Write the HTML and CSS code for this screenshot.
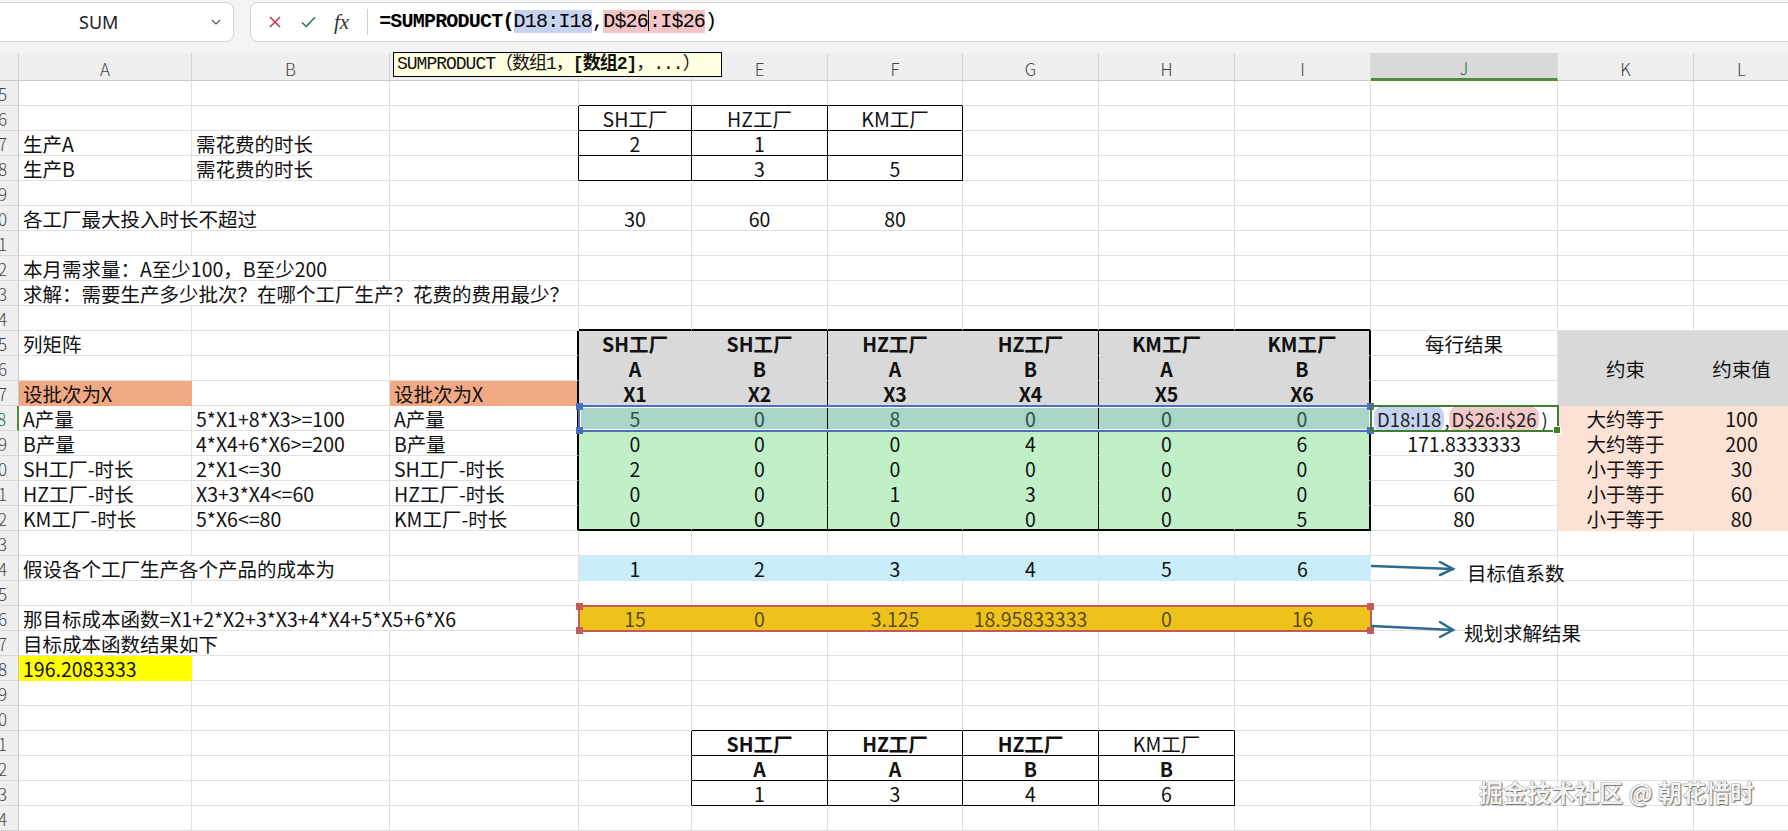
FILE: index.html
```html
<!DOCTYPE html>
<html lang="zh-CN">
<head>
  <meta charset="UTF-8">
  <title>规划求解 - SUMPRODUCT</title>
  <link rel="stylesheet" href="styles.css">
</head>
<body>

  <div class="topbar">
    <div class="namebox">
      <span class="name">SUM</span>
      <svg class="chev" width="10" height="6" viewBox="0 0 10 6"><path d="M1 1 L5 5 L9 1" fill="none" stroke="#555" stroke-width="1.2"/></svg>
    </div>
    <div class="fbox">
      <svg class="ic-x" width="12" height="12" viewBox="0 0 12 12"><path d="M1 1 L11 11 M11 1 L1 11" stroke="#c4314b" stroke-width="1.5" fill="none"/></svg>
      <svg class="ic-ok" width="15" height="12" viewBox="0 0 15 12"><path d="M1 6.5 L5.2 10.5 L14 1.2" stroke="#217346" stroke-width="1.5" fill="none"/></svg>
      <span class="ic-fx">fx</span>
      <span class="fsep"></span>
      <span class="formula"><b>=SUMPRODUCT(</b><span class="fb-blue">D18:I18</span>,<span class="fb-red">D$26<i class="caret"></i>:I$26</span>)</span>
    </div>
  </div>

  <div class="sheet" id="sheet">
    <div class="ref ref-blue"><i class="tl"></i><i class="tr"></i><i class="bl"></i><i class="br-h"></i></div>
    <div class="ref ref-red"><i class="tl"></i><i class="tr"></i><i class="bl"></i><i class="br-h"></i></div>
  </div>

  <div class="tip">SUMPRODUCT（数组1，<b>[数组2]</b>，...）</div>

  <svg class="notes" width="260" height="100" viewBox="0 0 260 100">
    <g stroke="#2d6b8c" stroke-width="2.5" fill="none" stroke-linecap="round">
      <path d="M12 16 L93 19"/>
      <path d="M80 12 L93 19 L80 25"/>
      <path d="M12 76 L93 80"/>
      <path d="M80 72 L93 80 L80 87"/>
    </g>
    <text x="107" y="31">目标值系数</text>
    <text x="104" y="91">规划求解结果</text>
  </svg>

  <div class="watermark">掘金技术社区 @ 朝花惜时</div>

  <script>
    const COLS = "ABCDEFGHIJKL";
    const TOP = 5, BOTTOM = 34;
    const cells = {};
    const extra = {};

    function put(ref, text, cls = "", span = 1) {
      cells[ref] = { text: String(text), cls, span };
    }

    function addCls(ref, ...c) {
      (extra[ref] = extra[ref] || []).push(...c);
    }

    function parse(ref) {
      return { c: COLS.indexOf(ref[0]), r: +ref.slice(1) };
    }

    function each(from, to, fn) {
      const a = parse(from), b = parse(to);
      for (let r = a.r; r <= b.r; r++) {
        for (let c = a.c; c <= b.c; c++) fn(COLS[c] + r);
      }
    }

    function fill(from, to, cls) {
      each(from, to, ref => addCls(ref, cls));
    }

    // thin black lines round and inside a block
    function thinBox(from, to) {
      const a = parse(from), b = parse(to);
      each(from, to, ref => addCls(ref, "br", "bb"));
      for (let r = a.r; r <= b.r; r++) addCls(COLS[a.c - 1] + r, "br");
      for (let c = a.c; c <= b.c; c++) addCls(COLS[c] + (a.r - 1), "bb");
    }

    // texts
    put("D6", "SH工厂", "c"); put("E6", "HZ工厂", "c"); put("F6", "KM工厂", "c");
    put("A7", "生产A"); put("B7", "需花费的时长"); put("D7", 2, "c"); put("E7", 1, "c");
    put("A8", "生产B"); put("B8", "需花费的时长"); put("E8", 3, "c"); put("F8", 5, "c");
    put("A10", "各工厂最大投入时长不超过", "", 2);
    put("D10", 30, "c"); put("E10", 60, "c"); put("F10", 80, "c");
    put("A12", "本月需求量：A至少100，B至少200", "", 2);
    put("A13", "求解：需要生产多少批次？在哪个工厂生产？花费的费用最少？", "", 3);
    put("A15", "列矩阵");
    put("J15", "每行结果", "c");
    put("K16", "约束", "c"); put("L16", "约束值", "c");
    put("A17", "设批次为X"); put("C17", "设批次为X");

    const head = [["SH工厂", "A", "X1"], ["SH工厂", "B", "X2"], ["HZ工厂", "A", "X3"],
                  ["HZ工厂", "B", "X4"], ["KM工厂", "A", "X5"], ["KM工厂", "B", "X6"]];
    head.forEach((h, i) => h.forEach((t, k) => put(COLS[3 + i] + (15 + k), t, "c b")));

    const rows = [
      ["A产量", "5*X1+8*X3>=100", [5, 0, 8, 0, 0, 0], "", "大约等于", 100],
      ["B产量", "4*X4+6*X6>=200", [0, 0, 0, 4, 0, 6], "171.8333333", "大约等于", 200],
      ["SH工厂-时长", "2*X1<=30", [2, 0, 0, 0, 0, 0], 30, "小于等于", 30],
      ["HZ工厂-时长", "X3+3*X4<=60", [0, 0, 1, 3, 0, 0], 60, "小于等于", 60],
      ["KM工厂-时长", "5*X6<=80", [0, 0, 0, 0, 0, 5], 80, "小于等于", 80]
    ];
    rows.forEach((row, k) => {
      const r = 18 + k;
      put("A" + r, row[0]); put("B" + r, row[1]); put("C" + r, row[0]);
      row[2].forEach((v, i) => put(COLS[3 + i] + r, v, "c"));
      if (row[3] !== "") put("J" + r, row[3], "c");
      put("K" + r, row[4], "c"); put("L" + r, row[5], "c");
    });
    put("J18", '<span class="hl hl-b">D18:I18</span>,<span class="hl hl-r">D$26:I$26</span>)', "active");

    put("A24", "假设各个工厂生产各个产品的成本为", "", 2);
    [1, 2, 3, 4, 5, 6].forEach((v, i) => put(COLS[3 + i] + 24, v, "c"));
    put("A26", "那目标成本函数=X1+2*X2+3*X3+4*X4+5*X5+6*X6", "", 3);
    [15, 0, 3.125, 18.95833333, 0, 16].forEach((v, i) => put(COLS[3 + i] + 26, v, "c"));
    put("A27", "目标成本函数结果如下", "", 2);
    put("A28", "196.2083333");

    put("E31", "SH工厂", "c b"); put("F31", "HZ工厂", "c b"); put("G31", "HZ工厂", "c b"); put("H31", "KM工厂", "c");
    put("E32", "A", "c b"); put("F32", "A", "c b"); put("G32", "B", "c b"); put("H32", "B", "c b");
    put("E33", 1, "c"); put("F33", 3, "c"); put("G33", 4, "c"); put("H33", 6, "c");

    // fills
    fill("A17", "A17", "f-orange"); fill("C17", "C17", "f-orange");
    fill("D15", "I17", "f-gray"); fill("D18", "I22", "f-green"); fill("D18", "I18", "f-sel");
    fill("K15", "L17", "f-gray"); fill("K18", "L22", "f-peach");
    fill("D24", "I24", "f-blue"); fill("D26", "I26", "f-gold");
    fill("A28", "A28", "f-yellow");

    // borders
    thinBox("D6", "F8");
    thinBox("E31", "H33");
    for (let r = 15; r <= 22; r++) {
      addCls("C" + r, "br2"); addCls("I" + r, "br2");
      addCls("E" + r, "br"); addCls("G" + r, "br");
    }
    "DEFGHI".split("").forEach(c => { addCls(c + "14", "bb2"); addCls(c + "22", "bb2"); });

    function renderSheet() {
      const sheet = document.getElementById("sheet");
      const frag = document.createDocumentFragment();

      function add(cls, area) {
        const div = document.createElement("div");
        div.className = cls;
        div.style.gridArea = area;
        frag.appendChild(div);
        return div;
      }

      add("corner", "1 / 1");
      for (let c = 0; c < COLS.length; c++) {
        const h = add("colhead" + (COLS[c] === "J" ? " on" : ""), `1 / ${c + 2}`);
        h.textContent = COLS[c];
      }

      for (let r = TOP; r <= BOTTOM; r++) {
        const gr = r - TOP + 2;
        const rh = add("rowhead" + (r === 18 ? " on" : ""), `${gr} / 1`);
        rh.innerHTML = `<span>${r}</span>`;
        let skip = 0;
        for (let c = 0; c < COLS.length; c++) {
          if (skip > 0) { skip--; continue; }
          const ref = COLS[c] + r;
          const d = cells[ref] || { text: "", cls: "", span: 1 };
          const cls = ["cell", d.cls, ...(extra[ref] || [])].join(" ");
          const div = add(cls, `${gr} / ${c + 2} / span 1 / span ${d.span}`);
          if (d.cls === "active") div.innerHTML = d.text;
          else div.textContent = d.text;
          skip = d.span - 1;
        }
      }
      sheet.insertBefore(frag, sheet.firstChild);
    }

    window.onload = () => {
      renderSheet();
    };
  </script>

</body>
</html>
```

FILE: styles.css
```css
* {
  margin: 0;
  padding: 0;
  box-sizing: border-box;
}

body {
  width: 1788px;
  height: 831px;
  overflow: hidden;
  position: relative;
  background-color: #fff;
  font-family: "Noto Sans CJK SC", "Noto Sans", sans-serif;
  color: #111;
}

/* formula bar */
.topbar {
  height: 53px;
  display: flex;
  align-items: flex-start;
  gap: 16px;
  padding-top: 2px;
  background-color: #f4f4f4;
}

.namebox {
  width: 242px;
  height: 40px;
  margin-left: -8px;
  display: flex;
  align-items: center;
  padding-left: 86px;
  padding-right: 12px;
  background-color: #fff;
  border: 1px solid #d4d4d4;
  border-radius: 8px;
}

.name {
  font-family: "Noto Sans", sans-serif;
  font-size: 18px;
  color: #222;
}

.chev {
  margin-left: auto;
}

.fbox {
  flex: 1;
  height: 40px;
  margin-right: -20px;
  display: flex;
  align-items: center;
  padding-left: 18px;
  background-color: #fff;
  border: 1px solid #d4d4d4;
  border-radius: 8px;
}

.ic-ok {
  margin-left: 20px;
}

.ic-fx {
  margin-left: 18px;
  font-family: "Liberation Serif", serif;
  font-style: italic;
  font-size: 21px;
  color: #333;
}

.fsep {
  width: 1px;
  height: 26px;
  margin-left: 18px;
  background-color: #d0d0d0;
}

.formula {
  margin-left: 11px;
  font-family: "Liberation Mono", monospace;
  font-size: 20px;
  letter-spacing: -0.8px;
  line-height: 24px;
  color: #000;
  white-space: nowrap;
}

.formula b {
  font-weight: 600;
}

.fb-blue {
  background-color: #c6d3f0;
}

.fb-red {
  background-color: #f2c6c6;
}

.caret {
  display: inline-block;
  width: 1px;
  height: 21px;
  vertical-align: -4px;
  background-color: #000;
}

/* sheet grid */
.sheet {
  display: grid;
  grid-template-columns: 19px 173px 198px 189px 113px 136px 135px 136px 136px 136px 187px 136px 96px;
  grid-template-rows: 28px repeat(30, 25px);
}

.corner,
.colhead {
  background-color: #efefef;
  border-right: 1px solid #d8d8d8;
  border-bottom: 1px solid #c9c9c9;
}

.colhead {
  display: flex;
  align-items: center;
  justify-content: center;
  padding-top: 3px;
  font-size: 17px;
  font-weight: 300;
  color: #444;
}

.colhead.on {
  background-color: #d9d9d9;
  border-bottom: 3px solid #4e8a37;
  color: #1f6e4a;
}

.rowhead {
  display: flex;
  justify-content: flex-end;
  align-items: center;
  overflow: hidden;
  padding-right: 11px;
  background-color: #efefef;
  border-right: 1px solid #c9c9c9;
  border-bottom: 1px solid #d8d8d8;
  font-size: 17px;
  font-weight: 300;
  color: #444;
}

.rowhead.on {
  border-right: 2px solid #4e8a37;
  color: #1f6e4a;
}

.cell {
  padding: 1px 4px 0;
  border-right: 1px solid #e1e1e1;
  border-bottom: 1px solid #e1e1e1;
  font-size: 19.5px;
  line-height: 24px;
  white-space: nowrap;
  overflow: hidden;
}

.c {
  text-align: center;
}

.b {
  font-weight: 700;
}

/* fills */
.f-orange { background-color: #f1a983; border-color: #f1a983; }
.f-gray { background-color: #d9d9d9; border-color: #d9d9d9; }
.f-green { background-color: #c1f0c8; border-color: #c1f0c8; }
.f-sel { background-color: #a9d6c9; border-color: #a9d6c9; color: #2f4f47; }
.f-peach { background-color: #fbe2d5; border-color: #fbe2d5; }
.f-blue { background-color: #caedfb; border-color: #caedfb; }
.f-gold { background-color: #edc31b; border-color: #edc31b; color: #5e4a16; }
.f-yellow { background-color: #ffff00; border-color: #ffff00; }

/* table borders */
.br { border-right-color: #000; }
.bb { border-bottom-color: #000; }
.br2 { border-right: 2px solid #000; }
.bb2 { border-bottom: 2px solid #000; }

/* editing cell J18 */
.active {
  position: relative;
  z-index: 3;
  overflow: visible;
  padding-left: 3px;
  outline: 2px solid #3f7f2f;
  outline-offset: -1px;
  font-size: 18.5px;
  color: #222;
}

.active::after {
  content: "";
  position: absolute;
  right: -4px;
  bottom: -4px;
  width: 6px;
  height: 6px;
  background-color: #3f7f2f;
  border: 1px solid #fff;
}

.hl {
  padding: 0 3px;
  border-radius: 9px;
}

.hl-b { background-color: #c5d4f2; }
.hl-r { background-color: #f3c8c8; margin-left: -1px; margin-right: 2px; }

/* formula reference boxes */
.ref {
  position: relative;
  z-index: 2;
  margin: -1px;
  border: 2px solid;
  box-shadow: inset 0 0 0 1px #fff;
  pointer-events: none;
}

.ref-blue {
  grid-area: 15 / 5 / 16 / 11;
  border-color: #4a6fc1;
  color: #4a6fc1;
}

.ref-red {
  grid-area: 23 / 5 / 24 / 11;
  border-color: #c25b5b;
  color: #c25b5b;
  box-shadow: none;
}

.ref i {
  position: absolute;
  width: 7px;
  height: 7px;
  background-color: currentColor;
}

.ref .tl { left: -4px; top: -4px; }
.ref .tr { right: -4px; top: -4px; }
.ref .bl { left: -4px; bottom: -4px; }
.ref .br-h { right: -4px; bottom: -4px; }

/* overlays */
.tip {
  position: absolute;
  left: 393px;
  top: 52px;
  width: 329px;
  height: 25px;
  padding: 0 3px;
  background-color: #ffffe1;
  border: 1px solid #000;
  font-family: "Liberation Mono", "Noto Sans CJK SC", monospace;
  font-size: 18px;
  letter-spacing: -1px;
  line-height: 23px;
  white-space: nowrap;
  z-index: 5;
}

.notes {
  position: absolute;
  left: 1360px;
  top: 550px;
  z-index: 4;
}

.notes text {
  font-family: "Noto Sans CJK SC", sans-serif;
  font-size: 19.5px;
  fill: #111;
}

.watermark {
  position: absolute;
  left: 1479px;
  top: 774px;
  font-size: 24px;
  font-weight: 700;
  color: #f2f2f2;
  text-shadow: 0 0 1px #555, 1px 1px 1px #777;
  white-space: nowrap;
  z-index: 6;
}
```
